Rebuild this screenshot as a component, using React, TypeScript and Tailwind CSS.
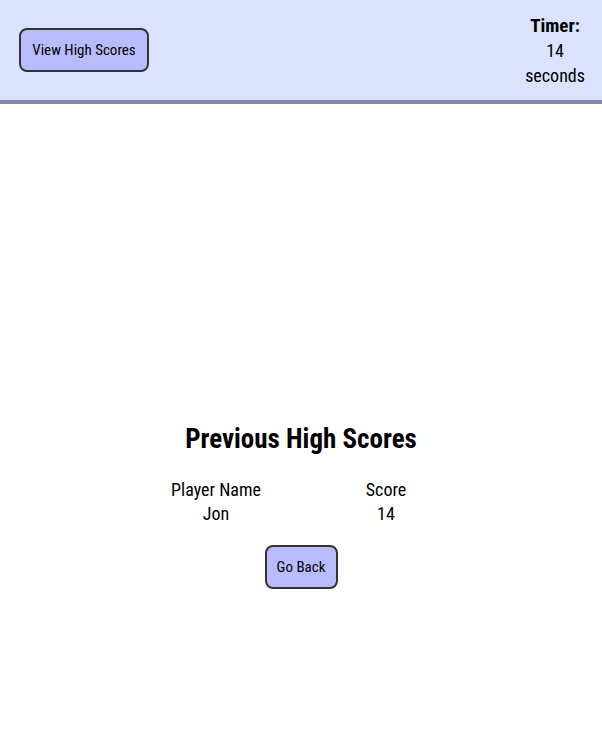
import React from 'react';

const App: React.FC = () => {
  const scores = [{ name: 'Jon', score: 14 }];

  return (
    <div className="min-h-[734px] bg-white font-['Roboto_Condensed',sans-serif] font-[450] text-black">
      {/* Header */}
      <header className="flex h-[104px] items-center justify-between border-b-4 border-[#7f8aae] bg-[#dae2fd] pl-[19px] pr-[17px]">
        <button className="h-[44px] w-[130px] rounded-lg border-2 border-[#333] bg-[#b8bcfc] text-[15px]">
          View High Scores
        </button>
        <div className="flex flex-col items-center text-[18px] leading-[25px]">
          <span className="text-[19px] font-bold">Timer:</span>
          <span>14</span>
          <span>seconds</span>
        </div>
      </header>

      {/* High scores */}
      <main className="flex flex-col items-center pt-[318px]">
        <h2 className="text-[27px] font-bold leading-[34px]">Previous High Scores</h2>
        <div className="mt-[22px] grid grid-cols-[170px_170px] text-center text-[18px] leading-[24px]">
          <span>Player Name</span>
          <span>Score</span>
          {scores.map((s) => (
            <React.Fragment key={s.name}>
              <span>{s.name}</span>
              <span>{s.score}</span>
            </React.Fragment>
          ))}
        </div>
        <button className="mt-[19px] h-[44px] w-[73px] rounded-lg border-2 border-[#333] bg-[#b8bcfc] text-[15px]">
          Go Back
        </button>
      </main>
    </div>
  );
};

export default App;
